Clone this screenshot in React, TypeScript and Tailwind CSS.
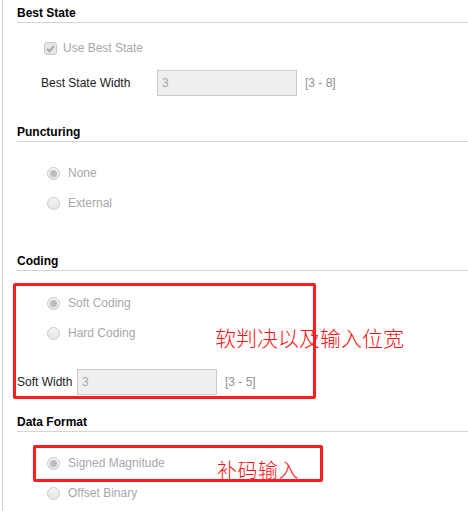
import React from 'react';

const FONT = "font-['Liberation_Sans','Noto_Sans_CJK_SC',Arial,sans-serif]";

const Header = ({ title, mt }: { title: string; mt: string }) => (
  <div className={`${mt} ml-[14px] pt-[4px] pb-[1px] border-b border-[#d6d6d6] text-[12px] leading-[16px] font-bold text-black`}>
    {title}
  </div>
);

const Radio = ({ label, checked, mt = '' }: { label: string; checked?: boolean; mt?: string }) => (
  <div className={`${mt} h-[30px] pl-[44px] flex items-center gap-[8px]`}>
    <span className="w-[13px] h-[13px] rounded-full border border-[#cacaca] bg-gradient-to-b from-[#f6f6f6] to-[#e4e4e4] flex items-center justify-center">
      {checked && <span className="w-[7px] h-[7px] rounded-full bg-[#bdbdbd]" />}
    </span>
    <span className="text-[12px] text-[#a8a8a8]">{label}</span>
  </div>
);

const InputRow = ({ label, value, range, labelClass, mt }: { label: string; value: string; range: string; labelClass: string; mt: string }) => (
  <div className={`${mt} h-[26px] flex items-center`}>
    <span className={`${labelClass} text-[12px] text-[#1c1c1c]`}>{label}</span>
    <div className="w-[140px] h-[26px] border border-[#cbcbcb] bg-[#efefef] flex items-center pl-[4px] text-[12px] text-[#a8a8a8]">
      {value}
    </div>
    <span className="ml-[8px] text-[12px] text-[#8a929c]">{range}</span>
  </div>
);

export default function App() {
  return (
    <div className={`${FONT} relative w-[468px] h-[511px] overflow-hidden bg-white`}>
      <div className="ml-[2px] h-[511px] pt-[1px] border-l border-[#d2d2d2]">
        {/* Best State */}
        <Header title="Best State" mt="mt-0" />
        <div className="mt-[10px] h-[30px] pl-[41px] flex items-center gap-[6px]">
          <span className="w-[13px] h-[13px] rounded-[3px] border border-[#c6c6c6] bg-[#e8e8e8] flex items-center justify-center">
            <svg width="11" height="11" viewBox="0 0 11 11">
              <path d="M2 5.8 L4.4 8.2 L9 3" fill="none" stroke="#a9a9a9" strokeWidth="2" />
            </svg>
          </span>
          <span className="text-[12px] text-[#a8a8a8]">Use Best State</span>
        </div>
        <InputRow label="Best State Width" value="3" range="[3 - 8]" labelClass="ml-[38px] w-[116px]" mt="mt-[7px]" />

        {/* Puncturing */}
        <Header title="Puncturing" mt="mt-[24px]" />
        <Radio label="None" checked mt="mt-[16px]" />
        <Radio label="External" />

        {/* Coding */}
        <Header title="Coding" mt="mt-[31px]" />
        <Radio label="Soft Coding" checked mt="mt-[17px]" />
        <Radio label="Hard Coding" />
        <InputRow label="Soft Width" value="3" range="[3 - 5]" labelClass="ml-[14px] w-[60px]" mt="mt-[21px]" />

        {/* Data Format */}
        <Header title="Data Format" mt="mt-[15px]" />
        <Radio label="Signed Magnitude" checked mt="mt-[16px]" />
        <Radio label="Offset Binary" />
      </div>

      {/* annotations */}
      <div className="absolute left-[13px] top-[283px] w-[303px] h-[116px] border-[3px] border-[#ff1c1c] rounded-[2px]" />
      <div className="absolute left-[215px] top-[327px] text-[21px] leading-[24px] font-light text-[#ff1010] whitespace-nowrap">
        软判决以及输入位宽
      </div>
      <div className="absolute left-[33px] top-[445px] w-[290px] h-[37px] border-[3px] border-[#ff1c1c] rounded-[2px]" />
      <div className="absolute left-[217px] top-[459px] text-[20px] tracking-[0.5px] leading-[24px] font-light text-[#ff1010] whitespace-nowrap">
        补码输入
      </div>
    </div>
  );
}
